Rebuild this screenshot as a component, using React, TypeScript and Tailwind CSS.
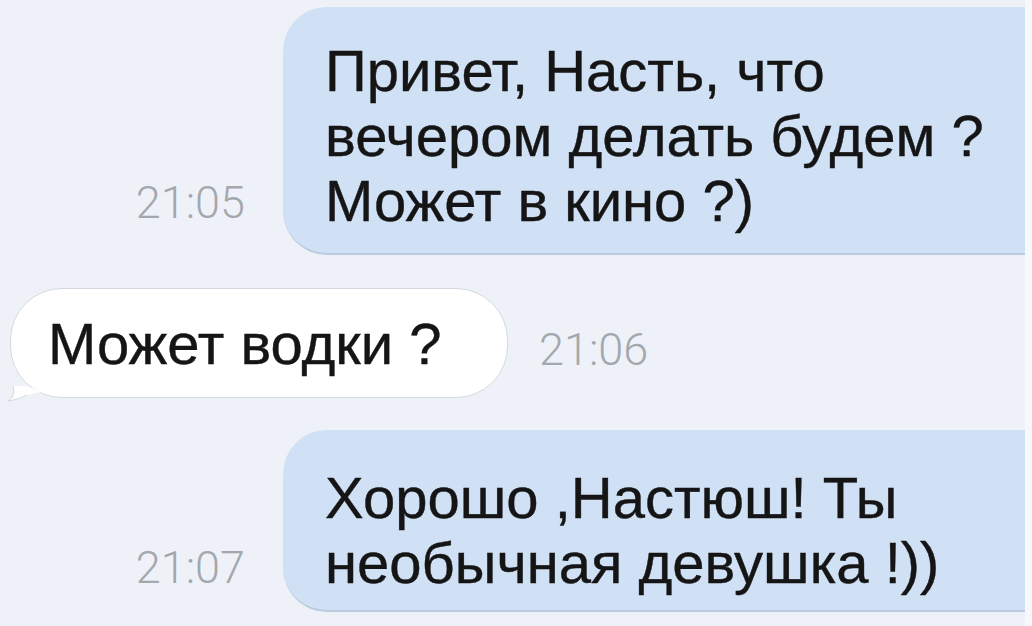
import React from "react";

const body = { fontFamily: '"Liberation Sans", Arial, sans-serif' };
const stamp = { fontFamily: 'Roboto, "Liberation Sans", sans-serif' };

function Time({ value }: { value: string }) {
  return (
    <span className="block text-[45px] leading-[44px] font-light text-[#a3a8ae]" style={stamp}>
      {value}
    </span>
  );
}

function Outgoing({
  lines,
  time,
  height,
  top,
  stampGap,
}: {
  lines: string[];
  time: string;
  height: string;
  top: string;
  stampGap: string;
}) {
  return (
    <div className="flex items-end justify-end">
      <div className={`mr-[38px] ${stampGap}`}>
        <Time value={time} />
      </div>
      <div
        className={`w-[742px] ${height} ${top} pl-[42px] bg-[#d1e1f5] rounded-l-[44px] border-b-2 border-[#bccbdd] text-[58px] leading-[65px] text-[#151515] [-webkit-text-stroke:0.4px_#151515]`}
        style={body}
      >
        {lines.map((l) => (
          <div key={l} className="whitespace-nowrap">
            {l}
          </div>
        ))}
      </div>
    </div>
  );
}

export default function App() {
  return (
    <div className="w-[1032px] h-[626px] flex bg-[#f6f8fb]">
      <div className="w-[1025px] h-full bg-[#eef2f8] flex flex-col pt-[7px]">
        <Outgoing
          lines={["Привет, Насть, что", "вечером делать будем ?", "Может в кино ?)"]}
          time="21:05"
          height="h-[248px]"
          top="pt-[31px]"
          stampGap="mb-[30px]"
        />

        <div className="mt-[33px] pl-[10px] flex items-center">
          <div className="relative">
            <div
              className="h-[110px] w-[498px] pl-[37px] flex items-center bg-white border border-[#d3d9e0] rounded-[52px] text-[58px] text-[#151515] [-webkit-text-stroke:0.4px_#151515]"
              style={body}
            >
              <span className="whitespace-nowrap">Может водки ?</span>
            </div>
            {/* tail at the lower left corner */}
            <svg className="absolute left-[-3px] bottom-[-4px]" width="36" height="16" viewBox="0 0 36 16">
              <path d="M6 0 C8 8 6 12 1 15 C8 14 14 12 20 9 L34 6 L20 0 Z" fill="#ffffff" />
              <path d="M6 0 C8 8 6 12 1 15 C8 14 14 12 20 9" fill="none" stroke="#d3d9e0" strokeWidth="1" />
            </svg>
          </div>
          <div className="ml-[31px] mt-[14px]">
            <Time value="21:06" />
          </div>
        </div>

        <div className="mt-[32px]">
          <Outgoing
            lines={["Хорошо ,Настюш! Ты", "необычная девушка !))"]}
            time="21:07"
            height="h-[182px]"
            top="pt-[35px]"
            stampGap="mb-[22px]"
          />
        </div>
      </div>
    </div>
  );
}
